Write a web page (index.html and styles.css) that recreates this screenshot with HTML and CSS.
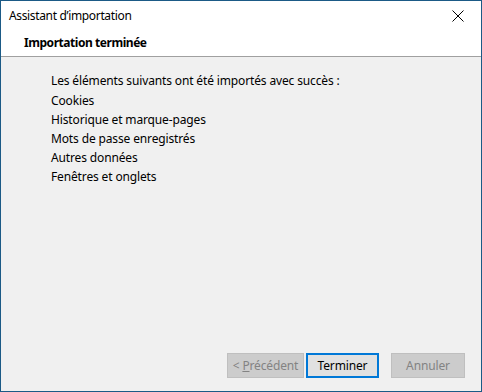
FILE: index.html
```html
<!DOCTYPE html>
<html>
<head lang="fr">
    <meta charset="UTF-8">
    <title>Assistant d'importation</title>
    <link rel="stylesheet" href="styles.css">
</head>
<body>
<div id="window">
    <div id="titlebar">
        <span class="title">Assistant d’importation</span>
        <div id="close">
            <svg width="12" height="12" viewBox="0 0 12 12"><path d="M0.5 0.5L11.5 11.5M11.5 0.5L0.5 11.5" stroke="#000" stroke-width="1" fill="none"/></svg>
        </div>
    </div>
    <div id="header">Importation terminée</div>
    <div id="content">
        <p class="intro">Les éléments suivants ont été importés avec succès :</p>
        <ul id="items">
            <li>Cookies</li>
            <li>Historique et marque-pages</li>
            <li>Mots de passe enregistrés</li>
            <li>Autres données</li>
            <li>Fenêtres et onglets</li>
        </ul>
    </div>
    <div id="buttons">
        <div class="btn disabled prev">&lt; <u>P</u>récédent</div>
        <div class="btn default">Terminer</div>
        <div class="btn disabled cancel">Annuler</div>
    </div>
</div>
</body>
</html>
```

FILE: styles.css
```css
*{
    margin: 0;
    padding: 0;
    box-sizing: border-box;
}
li{
    list-style: none;
}
body{
    font-family: "Noto Sans", "Open Sans", sans-serif;
    font-size: 12px;
    color: #000;
}
#window{
    width: 482px;
    height: 392px;
    border: 1px solid #1b5a86;
    background: #f0f0f0;
    display: flex;
    flex-direction: column;
}
#titlebar{
    height: 29px;
    background: #ffffff;
    display: flex;
    align-items: center;
    justify-content: space-between;
    padding-left: 8px;
}
.title{
    letter-spacing: -0.35px;
}
#close{
    width: 46px;
    height: 29px;
    display: flex;
    align-items: center;
    justify-content: center;
}
#close svg{
    display: block;
}
#header{
    height: 27px;
    background: #ffffff;
    border-bottom: 1px solid #a0a0a0;
    padding-left: 23px;
    font-weight: bold;
    line-height: 26px;
    letter-spacing: -0.45px;
}
#content{
    flex: 1;
    padding: 14px 0 0 50px;
    letter-spacing: -0.14px;
}
.intro{
    line-height: 19px;
    margin-bottom: 1px;
}
#items li{
    line-height: 19px;
}
#buttons{
    display: flex;
    justify-content: flex-end;
    padding: 0 16px 13px 0;
}
.btn{
    height: 25px;
    line-height: 23px;
    text-align: center;
    border: 1px solid #adadad;
    background: #e1e1e1;
    letter-spacing: -0.14px;
}
.btn.disabled{
    border-color: #bfbfbf;
    background: #cccccc;
    color: #838383;
}
.btn.prev{
    width: 77px;
}
.btn.default{
    width: 73px;
    margin-left: 2px;
    border: 2px solid #0078d7;
    line-height: 21px;
}
.btn.cancel{
    width: 74px;
    margin-left: 12px;
}
```
